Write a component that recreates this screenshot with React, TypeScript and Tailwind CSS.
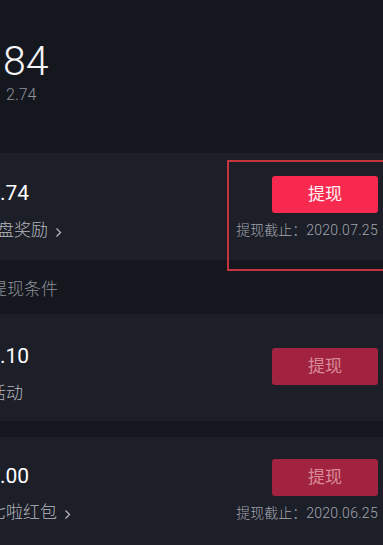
import React from "react";

const font = { fontFamily: "Roboto, 'Noto Sans CJK SC', sans-serif" };

function Chevron() {
  return (
    <svg width="7" height="11" viewBox="0 0 7 11" className="ml-[7px] mt-[3px]">
      <polyline points="1.5,1.5 5.5,5.5 1.5,9.5" fill="none" stroke="#b3b5bc" strokeWidth="1.3" />
    </svg>
  );
}

function Button({ active }: { active: boolean }) {
  return (
    <div
      className={
        "w-[106px] h-[37px] rounded-[3px] flex items-center justify-center text-[17px] leading-none " +
        (active ? "bg-[#f8294f] text-[#fff2f4]" : "bg-[#a1233f] text-[#d98a9a]")
      }
    >
      提现
    </div>
  );
}

export default function App() {
  return (
    <div className="w-[383px] h-[545px] overflow-hidden bg-[#15171f] flex flex-col" style={font}>
      {/* top */}
      <div className="h-[153px] shrink-0 flex flex-col pl-[3px] pt-[41px]">
        <div className="text-[41px] leading-none font-light text-[#f4f4f6]">84</div>
        <div className="text-[16px] leading-none font-light text-[#8f929b] mt-[5px] pl-[3px]">2.74</div>
      </div>

      {/* card 1 */}
      <div className="relative h-[107px] shrink-0 bg-[#1c1e28] flex justify-between">
        <div className="flex flex-col pt-[30px]">
          <div className="text-[21px] leading-none text-white">.74</div>
          <div className="flex items-center mt-[18px] text-[17px] leading-none font-light text-[#b5b7be]">
            <span className="ml-[-3px]">盘奖励</span>
            <Chevron />
          </div>
        </div>
        <div className="flex flex-col items-end pt-[23px] pr-[5px]">
          <Button active />
          <div className="mt-[10px] text-[14px] leading-none font-light text-[#a3a6ae]">
            提现截止：<span className="tracking-[0.3px]">2020.07.25</span>
          </div>
        </div>
        <div className="absolute left-[227px] top-[7px] w-[170px] h-[111px] border-2 border-[#c3343f] z-10" />
      </div>

      {/* header */}
      <div className="h-[54px] shrink-0 flex items-center pt-[5px]">
        <span className="ml-[-10px] text-[17px] leading-none font-light text-[#8d9098]">提现条件</span>
      </div>

      {/* card 2 */}
      <div className="h-[107px] shrink-0 bg-[#1c1e28] flex justify-between">
        <div className="flex flex-col pt-[32px]">
          <div className="text-[21px] leading-none text-white">.10</div>
          <div className="flex items-center mt-[18px] text-[17px] leading-none font-light text-[#b5b7be]">
            <span className="ml-[-11px]">活动</span>
          </div>
        </div>
        <div className="flex flex-col items-end pt-[34px] pr-[5px]">
          <Button active={false} />
        </div>
      </div>

      {/* gap */}
      <div className="h-[16px] shrink-0 bg-[#15171f]" />

      {/* card 3 */}
      <div className="flex-1 bg-[#1c1e28] flex justify-between">
        <div className="flex flex-col pt-[29px]">
          <div className="text-[21px] leading-none text-white">.00</div>
          <div className="flex items-center mt-[17px] text-[17px] leading-none font-light text-[#b5b7be]">
            <span className="ml-[-11px]">七啦红包</span>
            <Chevron />
          </div>
        </div>
        <div className="flex flex-col items-end pt-[22px] pr-[5px]">
          <Button active={false} />
          <div className="mt-[10px] text-[14px] leading-none font-light text-[#a3a6ae]">
            提现截止：<span className="tracking-[0.3px]">2020.06.25</span>
          </div>
        </div>
      </div>
    </div>
  );
}
